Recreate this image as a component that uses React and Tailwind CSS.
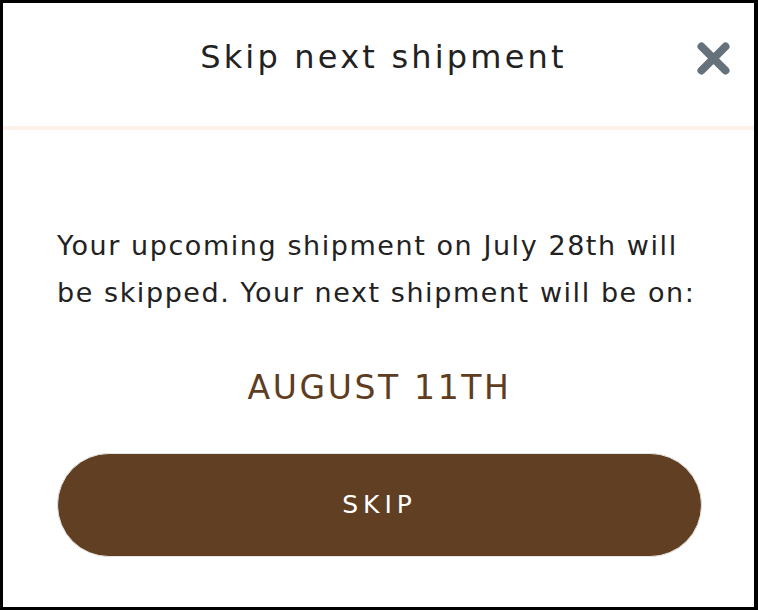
export default function App() {
    return (
        <div className="w-[758px] h-[610px] bg-white border-black border-t-[3px] border-l-[3px] border-b-[3px] border-r-[4px] flex flex-col font-['DejaVu_Sans',sans-serif]">
            {/* Header */}
            <div className="h-[123px] shrink-0 flex items-center pl-[10px] relative">
                <h1 className="flex-1 text-center text-[32px] tracking-[0.1em] text-[#222] pb-[15px]">Skip next shipment</h1>
                <button className="absolute right-[24px] top-[39px] w-[33px] h-[33px] flex items-center justify-center" aria-label="Close">
                    <svg width="33" height="33" viewBox="0 0 33 33">
                        <path d="M4.5 4.5 L28.5 28.5 M28.5 4.5 L4.5 28.5" stroke="#66727b" strokeWidth="8" strokeLinecap="round" />
                    </svg>
                </button>
            </div>
            <div className="h-[4px] shrink-0 bg-[#fdf0e8]" />

            {/* Body */}
            <div className="flex-1 pl-[54px] pr-[52px] pt-[92px] flex flex-col">
                <p className="text-[27px] leading-[47px] tracking-[0.058em] text-[#222] pr-[2px]">
                    Your upcoming shipment on July 28th will be skipped. Your next shipment will be on:
                </p>
                <div className="mt-[47px] text-center text-[33px] tracking-[0.08em] text-[#5e3d21]">AUGUST 11TH</div>
                <button className="mt-[40px] h-[104px] w-full rounded-full bg-[#613f23] border border-[#e8e4e0] text-white text-[25px] tracking-[0.2em]">
                    SKIP
                </button>
            </div>
        </div>
    );
}
